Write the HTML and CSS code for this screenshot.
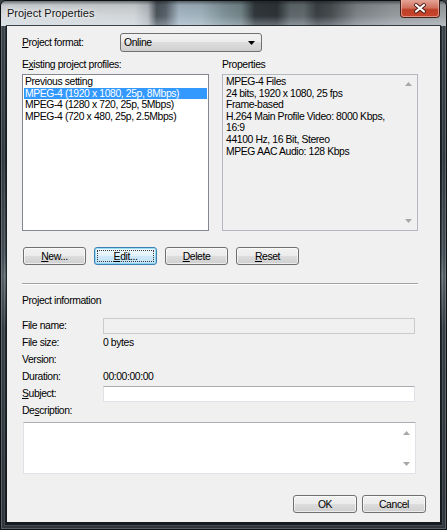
FILE: index.html
```html
<!DOCTYPE html>
<html>
<head>
<meta charset="utf-8">
<title>Project Properties</title>
<link rel="stylesheet" href="styles.css">
</head>
<body>
<div class="window">
  <div class="titlebar">
    <span class="title">Project Properties</span>
    <div class="close">
      <svg width="40" height="18" viewBox="0 0 40 18">
        <defs>
          <linearGradient id="cg" x1="0" y1="0" x2="0" y2="1">
            <stop offset="0" stop-color="#e3a497"/>
            <stop offset="0.45" stop-color="#d0705e"/>
            <stop offset="0.55" stop-color="#bf4128"/>
            <stop offset="1" stop-color="#c9452c"/>
          </linearGradient>
        </defs>
        <path d="M0.5 0 V14.5 Q0.5 17.5 3.5 17.5 H36.5 Q39.5 17.5 39.5 14.5 V0" fill="url(#cg)" stroke="#40201a"/>
        <path d="M1.5 0 V14 Q1.5 16.5 4 16.5 H36 Q38.5 16.5 38.5 14 V0" fill="none" stroke="#f0c4ba" stroke-opacity="0.6"/>
        <path d="M16 5 L24 11.5 M24 5 L16 11.5" stroke="#4a1a12" stroke-width="4" stroke-linecap="round"/>
        <path d="M16 5 L24 11.5 M24 5 L16 11.5" stroke="#ffffff" stroke-width="2.2" stroke-linecap="round"/>
      </svg>
    </div>
  </div>
  <div class="client">
    <div class="format-row">
      <span class="format-label"><u>P</u>roject format:</span>
      <div class="combo">
        <span>Online</span>
        <svg width="7" height="4" viewBox="0 0 7 4"><polygon points="0,0 7,0 3.5,4" fill="#000"/></svg>
      </div>
    </div>

    <div class="profiles">
      <div class="col-left">
        <div class="caption">E<u>x</u>isting project profiles:</div>
        <div class="listbox">
          <div class="item">Previous setting</div>
          <div class="item selected">MPEG-4 (1920 x 1080, 25p, 8Mbps)</div>
          <div class="item">MPEG-4 (1280 x 720, 25p, 5Mbps)</div>
          <div class="item">MPEG-4 (720 x 480, 25p, 2.5Mbps)</div>
        </div>
      </div>
      <div class="col-right">
        <div class="caption">Properties</div>
        <div class="propbox">
          <div class="proptext">
            <div>MPEG-4 Files</div>
            <div>24 bits, 1920 x 1080, 25 fps</div>
            <div>Frame-based</div>
            <div>H.264 Main Profile Video: 8000 Kbps,</div>
            <div>16:9</div>
            <div>44100 Hz, 16 Bit, Stereo</div>
            <div>MPEG AAC Audio: 128 Kbps</div>
          </div>
          <div class="vscroll">
            <svg width="7" height="4" viewBox="0 0 7 4"><polygon points="0,4 7,4 3.5,0" fill="#a8a8a8"/></svg>
            <svg width="7" height="4" viewBox="0 0 7 4"><polygon points="0,0 7,0 3.5,4" fill="#a8a8a8"/></svg>
          </div>
        </div>
      </div>
    </div>

    <div class="btnrow">
      <div class="btn"><span class="btn-in"><u>N</u>ew...</span></div>
      <div class="btn btn-focus"><span class="btn-in"><u>E</u>dit...</span></div>
      <div class="btn"><span class="btn-in"><u>D</u>elete</span></div>
      <div class="btn"><span class="btn-in"><u>R</u>eset</span></div>
    </div>

    <div class="sep"></div>

    <div class="section-title">Project information</div>

    <div class="info">
      <span class="lbl">File name:</span>
      <div class="textbox disabled"></div>
      <span class="lbl">File size:</span>
      <span class="val">0 bytes</span>
      <span class="lbl">Version:</span>
      <span class="val"></span>
      <span class="lbl">Duration:</span>
      <span class="val">00:00:00:00</span>
      <span class="lbl"><u>S</u>ubject:</span>
      <div class="textbox"></div>
      <span class="lbl">De<u>s</u>cription:</span>
      <span class="val"></span>
    </div>

    <div class="textarea">
      <div class="ta-body"></div>
      <div class="vscroll">
        <svg width="7" height="4" viewBox="0 0 7 4"><polygon points="0,4 7,4 3.5,0" fill="#a8a8a8"/></svg>
        <svg width="7" height="4" viewBox="0 0 7 4"><polygon points="0,0 7,0 3.5,4" fill="#a8a8a8"/></svg>
      </div>
    </div>

    <div class="footer">
      <div class="btn btn-wide"><span class="btn-in">OK</span></div>
      <div class="btn btn-wide"><span class="btn-in">Cancel</span></div>
    </div>
  </div>
</div>
</body>
</html>
```
FILE: styles.css
```css
* { box-sizing: border-box; }

html, body {
  margin: 0;
  padding: 0;
}

body {
  width: 447px;
  height: 530px;
  overflow: hidden;
  background: #3a4248;
  font-family: "Liberation Sans", Arial, sans-serif;
  font-size: 10.4px;
  letter-spacing: -0.4px;
  color: #000;
}

u { text-decoration: underline; text-underline-offset: 1px; }

.window {
  width: 447px;
  height: 530px;
  display: flex;
  flex-direction: column;
  border: 1px solid #0c1013;
  border-radius: 6px 6px 0 0;
  padding: 0 6px 7px 6px;
  background: linear-gradient(to bottom, #2c353c 0%, #1b2228 30%, #3a444c 48%, #59636a 52%, #222a30 62%, #151b20 100%);
  box-shadow: inset 0 0 0 1px rgba(160, 175, 185, 0.35), inset 0 0 0 3px rgba(0, 0, 0, 0.25), inset 0 0 0 4px rgba(200, 210, 220, 0.25);
}

.titlebar {
  height: 25px;
  margin: 0 -6px;
  display: flex;
  align-items: flex-start;
  border-radius: 5px 5px 0 0;
  background:
    linear-gradient(to bottom, rgba(20, 25, 28, 0.55) 0, rgba(20, 25, 28, 0.1) 16%, rgba(255, 255, 255, 0) 60%, rgba(225, 235, 245, 0.35) 100%),
    linear-gradient(to right, #d8dcdf 0%, #d2d6d9 30%, #b5bbc0 33%, #4c545b 35%, #58626b 37%, #a6b7c3 40%, #a1b3be 45%, #81939a 50%, #728388 54%, #31383b 57%, #2c3235 62%, #5f686c 65%, #626a6d 68%, #3a4043 71%, #474c4f 74%, #7e8488 80%, #969b9e 88%, #a0a5a8 100%);
}

.title {
  padding: 6px 0 0 6px;
  font-family: "Liberation Sans", Arial, sans-serif;
  font-size: 11px;
  letter-spacing: 0;
  color: #141414;
  text-shadow: 0 0 6px rgba(255, 255, 255, 0.9), 0 0 3px rgba(255, 255, 255, 0.9);
}

.close {
  margin-left: auto;
  margin-right: 6px;
  margin-top: -1px;
  height: 18px;
  line-height: 0;
}

.client {
  flex: 1;
  background: #f0f0f0;
  padding: 0 22px 0 15px;
  box-shadow: 0 0 0 1px rgba(20, 26, 30, 0.8);
  display: flex;
  flex-direction: column;
}

.format-row {
  margin-top: 7px;
  display: flex;
  align-items: center;
  height: 19px;
}

.format-label {
  width: 98px;
}

.combo {
  width: 142px;
  height: 19px;
  border: 1px solid #707070;
  border-radius: 3px;
  background: linear-gradient(to bottom, #f2f2f2 0%, #ebebeb 50%, #dddddd 50%, #cfcfcf 100%);
  display: flex;
  align-items: center;
  justify-content: space-between;
  padding: 0 6px 0 3px;
}

.profiles {
  margin-top: 6px;
  display: flex;
  gap: 13px;
}

.col-left { width: 187px; }
.col-right { width: 196px; }

.caption {
  height: 13px;
  line-height: 13px;
  margin-bottom: 3px;
}

.listbox {
  height: 157px;
  border: 1px solid #828790;
  background: #fff;
  padding: 1px;
}

.item {
  line-height: 11.7px;
  height: 11.7px;
  padding-left: 1px;
  white-space: nowrap;
}

.item.selected {
  background: #3399ff;
  color: #fff;
}

.propbox {
  height: 157px;
  border: 1px solid #b5b8bf;
  background: #f0f0f0;
  display: flex;
}

.proptext {
  flex: 1;
  padding: 1px 3px;
  line-height: 11.6px;
  white-space: nowrap;
}

.vscroll {
  width: 17px;
  display: flex;
  flex-direction: column;
  align-items: center;
  justify-content: space-between;
  padding: 7px 0 7px 0;
  line-height: 0;
}

.btnrow {
  margin-top: 16px;
  padding-left: 1px;
  display: flex;
  gap: 8px;
}

.btn {
  width: 63px;
  height: 18px;
  border: 1px solid #707070;
  border-radius: 3px;
  background: linear-gradient(to bottom, #f2f2f2 0%, #ebebeb 50%, #dddddd 50%, #cfcfcf 100%);
  box-shadow: inset 0 0 0 1px rgba(255, 255, 255, 0.6);
  padding: 2px;
  display: flex;
}

.btn-in {
  flex: 1;
  display: flex;
  align-items: center;
  justify-content: center;
  border: 1px solid transparent;
}

.btn-focus {
  border-color: #3c7fb1;
  background: linear-gradient(to bottom, #eef7fd 0%, #e2f2fc 50%, #cfe9f9 50%, #c2e2f6 100%);
  box-shadow: inset 0 0 0 1px rgba(120, 210, 240, 0.7);
}

.btn-focus .btn-in {
  border: 1px dotted #3a3a3a;
}

.btn-wide { width: 64px; }

.sep {
  margin-top: 18px;
  width: 396px;
  height: 2px;
  border-top: 1px solid #a0a0a0;
  border-bottom: 1px solid #ffffff;
}

.section-title {
  margin-top: 9px;
  height: 13px;
  line-height: 13px;
}

.info {
  margin-top: 10px;
  display: grid;
  grid-template-columns: 81px 312px;
  grid-auto-rows: 17px;
  align-items: center;
}

.textbox {
  height: 16px;
  border: 1px solid #dfe1e6;
  border-top-color: #abadb3;
  background: #fff;
  align-self: end;
}

.textbox.disabled {
  background: #f0f0f0;
  border-color: #c9cacd;
}

.textarea {
  margin-top: 3px;
  margin-left: 1px;
  width: 393px;
  height: 52px;
  border: 1px solid #dfe1e6;
  border-top-color: #abadb3;
  background: #fff;
  display: flex;
}

.ta-body { flex: 1; }

.textarea .vscroll {
  padding: 8px 0 7px 0;
}

.footer {
  margin-top: 21px;
  display: flex;
  justify-content: flex-end;
  gap: 5px;
  margin-right: -8px;
}
```
